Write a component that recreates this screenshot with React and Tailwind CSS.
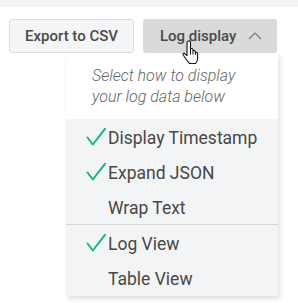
import React from "react";

function Check() {
    return (
        <svg width="20" height="18" viewBox="0 0 20 18" className="absolute left-[20px] top-[0px]">
            <path d="M1.5 9.5 L6.8 16.5 L19 0.8" fill="none" stroke="#16b67f" strokeWidth="2" strokeLinecap="round" strokeLinejoin="round" />
        </svg>
    );
}

function Item({ label, checked }) {
    return (
        <div className="relative pl-[42px] leading-[20px] text-[17.5px] text-[#474747]">
            {checked && <Check />}
            {label}
        </div>
    );
}

function HandCursor() {
    return (
        <svg width="18" height="25" viewBox="0 0 18 25" className="absolute left-[182px] top-[40px]">
            <path
                d="M6.5 1 Q8 0.6 8.5 2 L8.5 10 L8.5 9 Q10.2 7.8 11 9.6 L11 10.8 Q12.6 9.8 13.4 11.6 L13.4 12.4 Q15.2 11.8 15.6 13.6 L15.6 18.5 Q15.4 21.5 13.6 23.5 L7.6 23.5 Q5.6 21.4 3.4 18.2 L1.2 15 Q0.6 13.2 2.4 13.4 L5 15.6 L5 2.4 Q5.2 1.2 6.5 1 Z"
                fill="#fff"
                stroke="#111"
                strokeWidth="1.1"
                strokeLinejoin="round"
            />
            <path d="M8.5 10 L8.5 14.5 M11 10.8 L11 14.5 M13.4 12.4 L13.4 15" stroke="#111" strokeWidth="1" />
        </svg>
    );
}

export default function App() {
    return (
        <div className="relative w-[298px] h-[303px] bg-white overflow-hidden" style={{ fontFamily: "Roboto, 'Liberation Sans', sans-serif" }}>
            <div className="h-[7px] bg-[#f3f4f6]" />

            {/* toolbar buttons */}
            <div className="flex gap-[9px] pl-[9px] mt-[12px]">
                <button className="w-[125px] h-[34px] flex items-center justify-center rounded-[3px] border border-[#dadcde] bg-[#f4f5f6] text-[15px] font-medium text-[#4a4a4a]">
                    Export to CSV
                </button>
                <button className="w-[134px] h-[34px] flex items-center pl-[17px] rounded-[3px] bg-[#d9dbdb] text-[15px] font-medium text-[#4a4a4a]">
                    <span>Log display</span>
                    <svg width="14" height="8" viewBox="0 0 14 8" className="ml-[12px]">
                        <path d="M1 7 L7 1 L13 7" fill="none" stroke="#7a7a7a" strokeWidth="1.2" />
                    </svg>
                </button>
            </div>

            {/* dropdown menu */}
            <div className="absolute left-[66px] top-[53px] w-[212px] bg-white shadow-[2px_3px_5px_rgba(0,0,0,0.12)]">
                <div className="pl-[26px] pr-2 py-[12px] text-[16px] leading-[21px] italic font-light text-[#666]">
                    Select how to display
                    <br />
                    your log data below
                </div>
                <div className="bg-[#f3f4f6]">
                    <div className="flex flex-col gap-[15px] pt-[9px] pb-[6px]">
                        <Item label="Display Timestamp" checked />
                        <Item label="Expand JSON" checked />
                        <Item label="Wrap Text" />
                    </div>
                    <div className="h-px bg-[#d6d7d9]" />
                    <div className="flex flex-col gap-[15px] pt-[9px] pb-[7px]">
                        <Item label="Log View" checked />
                        <Item label="Table View" />
                    </div>
                </div>
            </div>

            <HandCursor />
        </div>
    );
}
